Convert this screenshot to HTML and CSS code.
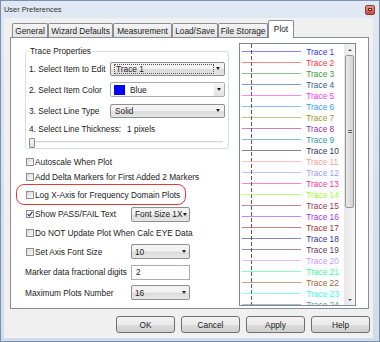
FILE: index.html
```html
<!DOCTYPE html>
<html lang="en">
<head>
    <meta charset="UTF-8">
    <title>User Preferences</title>
    <link rel="stylesheet" href="styles.css">
</head>
<body>
    <div class="window">
        <div class="titlebar">
            <span class="title">User Preferences</span>
            <span class="close"><i></i></span>
        </div>

        <div class="client">
            <div class="tabs">
                <div class="tab w-general">General</div>
                <div class="tab w-wizard">Wizard Defaults</div>
                <div class="tab w-measure">Measurement</div>
                <div class="tab w-load">Load/Save</div>
                <div class="tab w-file">File Storage</div>
                <div class="tab w-plot active">Plot</div>
            </div>

            <div class="panel">
                <div class="left">
                    <div class="group">
                        <div class="legend">Trace Properties</div>
                        <div class="grow">
                            <span class="glabel">1. Select Item to Edit</span>
                            <div class="combo gray">
                                <span class="focusbox">Trace 1</span>
                                <i class="arrow"></i>
                            </div>
                        </div>
                        <div class="grow">
                            <span class="glabel">2. Select Item Color</span>
                            <div class="combo white">
                                <span class="swatch"></span>
                                <span class="ctext">Blue</span>
                                <span class="dropbtn"><i class="arrow"></i></span>
                            </div>
                        </div>
                        <div class="grow">
                            <span class="glabel">3. Select Line Type</span>
                            <div class="combo gray">
                                <span class="ctext">Solid</span>
                                <i class="arrow"></i>
                            </div>
                        </div>
                        <div class="thick">
                            <span class="tlabel">4. Select Line Thickness:</span>
                            <span>1 pixels</span>
                        </div>
                        <div class="slider">
                            <span class="thumb"></span>
                        </div>
                    </div>

                    <div class="opt r1"><span class="cb"></span>Autoscale When Plot</div>
                    <div class="opt r2"><span class="cb"></span>Add Delta Markers for First Added 2 Markers</div>
                    <div class="opt hl"><span class="cb"></span>Log X-Axis for Frequency Domain Plots</div>
                    <div class="opt r4">
                        <span class="cb checked">
                            <svg width="6" height="6" viewBox="0 0 6 6"><path d="M0.6 3.1 L2.3 4.8 L5.4 0.8" fill="none" stroke="#2a3f73" stroke-width="1.3"/></svg>
                        </span>
                        <span class="wlabel">Show PASS/FAIL Text</span>
                        <div class="combo gray sm"><span class="ctext">Font Size 1X</span><i class="arrow"></i></div>
                    </div>
                    <div class="opt r5"><span class="cb"></span>Do NOT Update Plot When Calc EYE Data</div>
                    <div class="opt r6">
                        <span class="cb"></span>
                        <span class="wlabel">Set Axis Font Size</span>
                        <div class="combo gray sm"><span class="ctext">10</span><i class="arrow"></i></div>
                    </div>
                    <div class="opt r7">
                        <span class="plabel">Marker data fractional digits</span>
                        <div class="textbox">2</div>
                    </div>
                    <div class="opt r8">
                        <span class="plabel">Maximum Plots Number</span>
                        <div class="combo gray sm"><span class="ctext">16</span><i class="arrow"></i></div>
                    </div>
                </div>

                <div class="listbox">
                    <div class="items">
                        <div class="dash"></div>
                        <div class="item t1"><span class="line"></span>Trace 1</div>
                        <div class="item t2"><span class="line"></span>Trace 2</div>
                        <div class="item t3"><span class="line"></span>Trace 3</div>
                        <div class="item t4"><span class="line"></span>Trace 4</div>
                        <div class="item t5"><span class="line"></span>Trace 5</div>
                        <div class="item t6"><span class="line"></span>Trace 6</div>
                        <div class="item t7"><span class="line"></span>Trace 7</div>
                        <div class="item t8"><span class="line"></span>Trace 8</div>
                        <div class="item t9"><span class="line"></span>Trace 9</div>
                        <div class="item t10"><span class="line"></span>Trace 10</div>
                        <div class="item t11"><span class="line"></span>Trace 11</div>
                        <div class="item t12"><span class="line"></span>Trace 12</div>
                        <div class="item t13"><span class="line"></span>Trace 13</div>
                        <div class="item t14"><span class="line"></span>Trace 14</div>
                        <div class="item t15"><span class="line"></span>Trace 15</div>
                        <div class="item t16"><span class="line"></span>Trace 16</div>
                        <div class="item t17"><span class="line"></span>Trace 17</div>
                        <div class="item t18"><span class="line"></span>Trace 18</div>
                        <div class="item t19"><span class="line"></span>Trace 19</div>
                        <div class="item t20"><span class="line"></span>Trace 20</div>
                        <div class="item t21"><span class="line"></span>Trace 21</div>
                        <div class="item t22"><span class="line"></span>Trace 22</div>
                        <div class="item t23"><span class="line"></span>Trace 23</div>
                        <div class="item t24"><span class="line"></span>Trace 24</div>
                    </div>
                    <div class="scrollbar">
                        <div class="sbtn"><i class="up"></i></div>
                        <div class="track">
                            <div class="sthumb"><span class="grip"></span></div>
                        </div>
                        <div class="sbtn"><i class="down"></i></div>
                    </div>
                </div>
            </div>

            <div class="buttons">
                <div class="btn">OK</div>
                <div class="btn">Cancel</div>
                <div class="btn">Apply</div>
                <div class="btn">Help</div>
            </div>
        </div>
    </div>
</body>
</html>
```

FILE: styles.css
```css
* {
    box-sizing: border-box;
}
body {
    margin: 0;
    width: 380px;
    height: 342px;
    overflow: hidden;
    font-family: "Liberation Sans", Arial, sans-serif;
    font-size: 8.3px;
    color: #222;
    background: #d9e4f1;
}
.window {
    width: 380px;
    height: 342px;
    border: 1px solid #7990b0;
    background: linear-gradient(#dfe8f3, #cfdcec);
    display: flex;
    flex-direction: column;
}

/* title bar */
.titlebar {
    height: 17px;
    display: flex;
    align-items: center;
    justify-content: space-between;
    padding: 0 4px 0 3px;
}
.title {
    color: #333;
    font-size: 7.4px;
}
.close {
    width: 10px;
    height: 10px;
    border: 1px solid #8a3a33;
    border-radius: 2px;
    background: linear-gradient(#e49a8f, #c8493b);
    display: flex;
    align-items: center;
    justify-content: center;
}
.close i {
    width: 4px;
    height: 3px;
    background: #f4e2de;
    border: 1px solid #7a2a22;
}

/* client area */
.client {
    flex: 1;
    margin: 0 6px 3px 3px;
    padding: 2px 4px 0 6px;
    background: #f0f0f0;
}
.tabs {
    display: flex;
    align-items: flex-end;
    height: 17px;
    padding-left: 2px;
    position: relative;
    z-index: 1;
}
.tab {
    height: 14px;
    border: 1px solid #898c95;
    border-bottom: none;
    border-radius: 2px 2px 0 0;
    background: linear-gradient(#f4f4f4, #e4e4e4);
    display: flex;
    align-items: center;
    justify-content: center;
    white-space: nowrap;
}
.tab.active {
    height: 18px;
    margin-bottom: -1px;
    background: #fff;
    padding-bottom: 2px;
}
.w-general { width: 36px; }
.w-wizard { width: 65px; }
.w-measure { width: 59px; }
.w-load { width: 46px; }
.w-file { width: 50px; }
.w-plot { width: 26px; }

.panel {
    height: 272px;
    border: 1px solid #898c95;
    background: #fff;
    display: flex;
    padding-left: 14px;
}
.left {
    width: 215px;
}

/* group box */
.group {
    margin-top: 13px;
    width: 204px;
    border: 1px solid #d5dfe5;
    border-radius: 3px;
}
.legend {
    width: fit-content;
    height: 12px;
    line-height: 12px;
    margin: -7px 0 1px 3px;
    padding: 0 1px;
    background: #fff;
}
.grow {
    height: 21px;
    display: flex;
    align-items: center;
    padding-left: 3px;
}
.glabel {
    width: 81px;
    white-space: nowrap;
}
.thick {
    height: 16px;
    display: flex;
    align-items: center;
    padding-left: 3px;
    white-space: nowrap;
}
.tlabel {
    margin-right: 6px;
}
.slider {
    height: 11px;
    margin: 0 5px 0 3px;
    display: flex;
    align-items: center;
    background: linear-gradient(transparent 4px, #d6d6d6 4px, #d6d6d6 5px, #f2f2f2 5px, #f2f2f2 6px, transparent 6px);
}
.thumb {
    width: 6px;
    height: 10px;
    border: 1px solid #8a8a8a;
    border-radius: 1px;
    background: linear-gradient(#fafafa, #dedede);
}

/* combo boxes */
.combo {
    width: 115px;
    height: 14px;
    border: 1px solid #8e8f8f;
    border-radius: 2px;
    display: flex;
    align-items: center;
    padding-left: 3px;
    white-space: nowrap;
}
.combo.gray {
    background: linear-gradient(#f3f3f3 45%, #dcdcdc 55%, #e6e6e6);
}
.combo.white {
    height: 15px;
    background: #fff;
    border-color: #abadb3;
    padding: 0 0 0 3px;
}
.combo.sm {
    width: 59px;
    height: 15px;
    padding-left: 2px;
}
.combo.sm .arrow {
    margin-right: 3px;
}
.focusbox {
    width: 100px;
    height: 10px;
    line-height: 9px;
    border: 1px dotted #555;
    padding-left: 1px;
}
.ctext {
    padding-left: 1px;
}
.swatch {
    width: 11px;
    height: 10px;
    background: #0000ff;
    margin-right: 4px;
}
.dropbtn {
    margin-left: auto;
    width: 10px;
    height: 100%;
    background: linear-gradient(#f6f6f6, #e2e2e2);
    display: flex;
    align-items: center;
    justify-content: center;
}
.dropbtn .arrow {
    margin: 0;
}
.arrow {
    margin-left: auto;
    margin-right: 4px;
    width: 0;
    height: 0;
    border-left: 2.5px solid transparent;
    border-right: 2.5px solid transparent;
    border-top: 3px solid #222;
}

/* option rows */
.opt {
    display: flex;
    align-items: center;
    padding-left: 1px;
    white-space: nowrap;
}
.r1 { margin-top: 5px; height: 16px; }
.r2 { height: 14px; }
.hl {
    height: 21px;
    width: 170px;
    margin-left: -9px;
    padding-left: 9px;
    border: 1px solid #e03a3a;
    border-radius: 8px;
}
.r4 { height: 18px; }
.r5 { height: 20px; }
.r6 { height: 17px; }
.r7 { height: 24px; padding-left: 0; }
.r8 { height: 17px; padding-left: 0; }
.cb {
    width: 8px;
    height: 8px;
    flex: none;
    margin-right: 1px;
    border: 1px solid #8f8f8f;
    background: linear-gradient(135deg, #dcdcdc, #fafafa);
    display: flex;
    align-items: center;
    justify-content: center;
}
.cb.checked {
    background: #f4f4f4;
}
.wlabel {
    width: 96px;
}
.plabel {
    width: 106px;
}
.textbox {
    width: 59px;
    height: 15px;
    border: 1px solid #abadb3;
    background: #fff;
    padding-left: 4px;
    line-height: 13px;
}

/* trace list */
.listbox {
    margin-top: 5px;
    margin-left: auto;
    margin-right: 12px;
    width: 117px;
    height: 263px;
    border: 1px solid #828790;
    display: flex;
}
.items {
    flex: 1;
    position: relative;
    overflow: hidden;
    padding-top: 2px;
}
.dash {
    position: absolute;
    left: 11px;
    top: 0;
    bottom: 0;
    width: 1px;
    background: repeating-linear-gradient(#5a5a5a 0 4px, transparent 4px 6px);
}
.item {
    height: 11px;
    display: flex;
    align-items: center;
    padding-left: 2px;
    font-size: 8.3px;
    white-space: nowrap;
}
.line {
    width: 59px;
    height: 1px;
    margin-right: 5px;
    background: currentColor;
    opacity: 0.6;
}
.t1 { color: #3333ff; }
.t2 { color: #ff3333; }
.t3 { color: #339933; }
.t4 { color: #335b85; }
.t5 { color: #ff33ff; }
.t6 { color: #3399ff; }
.t7 { color: #999933; }
.t8 { color: #993399; }
.t9 { color: #339999; }
.t10 { color: #33335c; }
.t11 { color: #ff9999; }
.t12 { color: #9999ff; }
.t13 { color: #ff3399; }
.t14 { color: #99ff33; }
.t15 { color: #993355; }
.t16 { color: #9933ff; }
.t17 { color: #993333; }
.t18 { color: #333399; }
.t19 { color: #663366; }
.t20 { color: #cc99ff; }
.t21 { color: #33ff99; }
.t22 { color: #996633; }
.t23 { color: #33ffff; }
.t24 { color: #669999; }

.scrollbar {
    width: 11px;
    display: flex;
    flex-direction: column;
    background: linear-gradient(90deg, #e8e8e8, #f5f5f5);
}
.sbtn {
    height: 11px;
    display: flex;
    align-items: center;
    justify-content: center;
}
.up, .down {
    width: 0;
    height: 0;
    border-left: 2px solid transparent;
    border-right: 2px solid transparent;
}
.up {
    border-bottom: 2px solid #555;
}
.down {
    border-top: 2px solid #555;
}
.track {
    flex: 1;
}
.sthumb {
    margin: 0 1px;
    height: 153px;
    border: 1px solid #979797;
    border-radius: 2px;
    background: linear-gradient(90deg, #eaeaea, #d4d4d4);
    display: flex;
    align-items: center;
    justify-content: center;
}
.grip {
    width: 4px;
    height: 4px;
    background: repeating-linear-gradient(#666 0 1px, transparent 1px 2px);
}

/* dialog buttons */
.buttons {
    display: flex;
    justify-content: flex-end;
    gap: 6px;
    margin-top: 7px;
    margin-right: -1px;
}
.btn {
    width: 59px;
    height: 17px;
    border: 1px solid #707070;
    border-radius: 3px;
    background: linear-gradient(#f2f2f2 0, #ebebeb 50%, #dddddd 50%, #cfcfcf 100%);
    display: flex;
    align-items: center;
    justify-content: center;
}
```
